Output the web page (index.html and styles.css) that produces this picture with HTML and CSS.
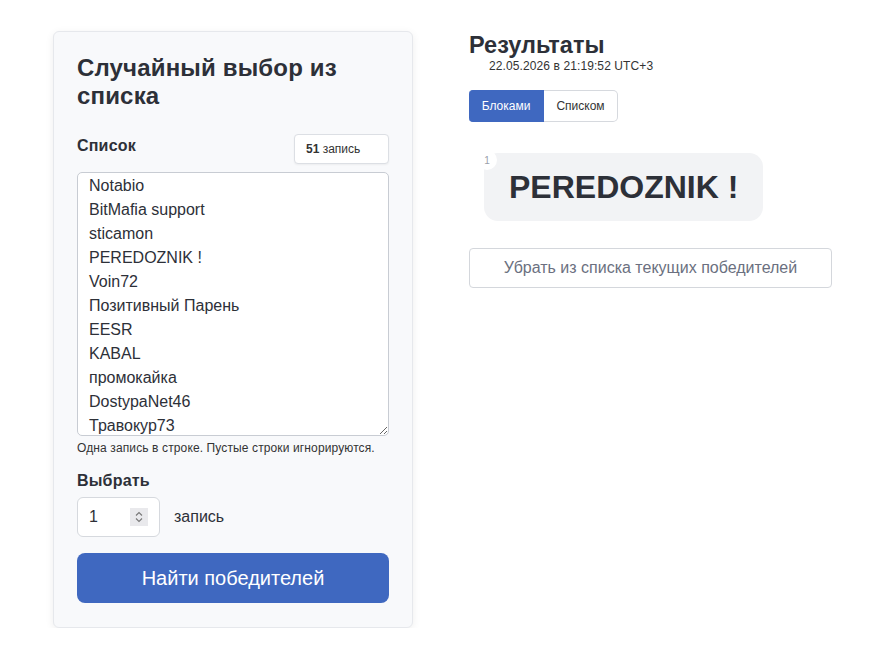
FILE: index.html
```html
<!DOCTYPE html>
<html lang="ru">
<head>
<meta charset="utf-8">
<link rel="stylesheet" href="styles.css">
</head>
<body>
<div class="page">
  <section class="card">
    <h1 class="title">Случайный выбор из списка</h1>
    <div class="list-head">
      <label class="label">Список</label>
      <div class="count"><b>51</b> запись</div>
    </div>
    <textarea class="list" readonly>Notabio
BitMafia support
sticamon
PEREDOZNIK !
Voin72
Позитивный Парень
EESR
KABAL
промокайка
DostypaNet46
Травокур73
Kolyan
Мистер Х</textarea>
    <p class="hint">Одна запись в строке. Пустые строки игнорируются.</p>
    <label class="label pick">Выбрать</label>
    <div class="pick-row">
      <div class="num">
        <span>1</span>
        <span class="spin">
          <svg width="10" height="14" viewBox="0 0 10 14"><path d="M2 5.5 L5 2.5 L8 5.5" fill="none" stroke="#777" stroke-width="1.1"/><path d="M2 8.5 L5 11.5 L8 8.5" fill="none" stroke="#777" stroke-width="1.1"/></svg>
        </span>
      </div>
      <span class="unit">запись</span>
    </div>
    <button class="go">Найти победителей</button>
  </section>
  <section class="results">
    <h2 class="rtitle">Результаты</h2>
    <div class="date">22.05.2026 в 21:19:52 UTC+3</div>
    <div class="tabs">
      <button class="tab active">Блоками</button>
      <button class="tab">Списком</button>
    </div>
    <div class="winners">
      <div class="winner">
        <span class="idx">1</span>
        PEREDOZNIK !
      </div>
    </div>
    <button class="remove">Убрать из списка текущих победителей</button>
  </section>
</div>
</body>
</html>
```
FILE: styles.css
```css
* { box-sizing: border-box; }
body {
  margin: 0;
  background: #fff;
  font-family: "Liberation Sans", Arial, sans-serif;
  color: #2d3038;
}
.page {
  display: flex;
  align-items: flex-start;
  gap: 56px;
  padding: 31px 0 0 53px;
}
.card {
  width: 360px;
  background: #f8f9fb;
  border: 1px solid #e6e8ec;
  border-radius: 6px;
  box-shadow: 0 2px 8px rgba(0,0,0,0.07);
  padding: 22px 23px 24px 23px;
}
.title {
  font-size: 24px;
  font-weight: 700;
  line-height: 28px;
  letter-spacing: 0.17px;
  margin: 0 0 24px;
  color: #2d3038;
}
.list-head {
  display: flex;
  justify-content: space-between;
  align-items: flex-start;
  margin-bottom: 8px;
}
.label {
  font-weight: 700;
  font-size: 16px;
  line-height: 20px;
  padding-top: 2px;
  letter-spacing: 0.2px;
  display: block;
}
.count {
  width: 95px;
  height: 30px;
  background: #fff;
  border: 1px solid #dcdfe4;
  border-radius: 4px;
  font-size: 12px;
  line-height: 28px;
  padding-left: 11px;
  color: #333;
  box-shadow: 0 1px 2px rgba(0,0,0,0.05);
}
.count b { font-weight: 700; }
.list {
  display: block;
  width: 312px;
  height: 264px;
  resize: vertical;
  overflow: hidden;
  background: #fff;
  border: 1px solid #c8ccd3;
  border-radius: 5px;
  font-family: "Liberation Sans", Arial, sans-serif;
  font-size: 16px;
  line-height: 24px;
  padding: 1px 11px;
  color: #2d3038;
  margin: 0;
}
.hint {
  font-size: 12px;
  letter-spacing: 0.12px;
  color: #333;
  margin: 5px 0 0;
  line-height: 14px;
}
.pick { margin-top: 16px; padding-top: 0; }
.pick-row {
  display: flex;
  align-items: center;
  gap: 14px;
  margin-top: 6px;
}
.num {
  width: 83px;
  height: 40px;
  background: #fff;
  border: 1px solid #d6d9de;
  border-radius: 6px;
  display: flex;
  align-items: center;
  justify-content: space-between;
  padding: 0 11px 0 11px;
  font-size: 16px;
}
.spin {
  width: 18px;
  height: 18px;
  background: #e9e9ec;
  display: flex;
  align-items: center;
  justify-content: center;
}
.unit { font-size: 16px; color: #2d3038; }
.go {
  display: block;
  width: 312px;
  height: 50px;
  margin-top: 16px;
  background: #3f68c0;
  border: none;
  border-radius: 8px;
  color: #fff;
  font-family: "Liberation Sans", Arial, sans-serif;
  font-size: 20px;
}
.results { width: 363px; }
.rtitle {
  font-size: 23.5px;
  font-weight: 700;
  line-height: 26px;
  margin: 1px 0 0;
}
.date {
  font-size: 12px;
  letter-spacing: 0.1px;
  color: #333;
  padding-left: 20px;
  line-height: 16px;
}
.tabs {
  display: flex;
  margin-top: 16px;
}
.tab {
  height: 32px;
  font-family: "Liberation Sans", Arial, sans-serif;
  font-size: 12px;
  border: 1px solid #d6d9de;
  background: #fff;
  color: #333;
  padding: 0 12px;
  border-radius: 0 5px 5px 0;
  border-left: none;
  width: 74px;
}
.tab.active {
  background: #3f68c0;
  border-color: #3f68c0;
  color: #fff;
  border-radius: 4px 0 0 4px;
  width: 75px;
}
.winners {
  display: flex;
  padding: 31px 0 0 15px;
}
.winner {
  position: relative;
  background: #f2f3f5;
  border-radius: 14px;
  height: 68px;
  padding: 0 25px;
  display: flex;
  align-items: center;
  font-weight: 700;
  font-size: 32px;
  color: #2d3038;
}
.idx {
  position: absolute;
  left: -7px;
  top: -3px;
  width: 20px;
  height: 20px;
  background: #fff;
  border-radius: 50%;
  font-size: 10px;
  font-weight: 400;
  color: #9aa0ab;
  display: flex;
  align-items: center;
  justify-content: center;
}
.remove {
  display: block;
  width: 363px;
  height: 40px;
  margin-top: 27px;
  background: #fff;
  border: 1px solid #d4d7dc;
  border-radius: 4px;
  color: #6b7080;
  font-family: "Liberation Sans", Arial, sans-serif;
  font-size: 16px;
}
```
